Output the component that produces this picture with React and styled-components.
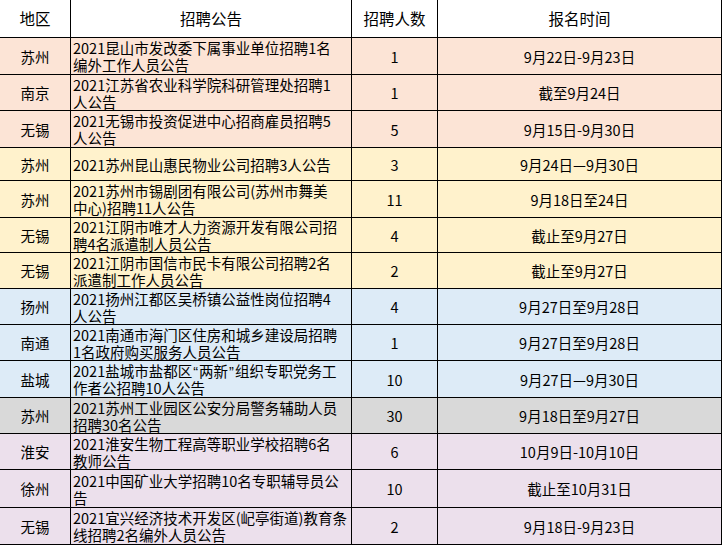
import React from "react";
import styled, { createGlobalStyle } from "styled-components";

const Global = createGlobalStyle`
  html, body { margin: 0; padding: 0; background: #ffffff; }
  body { font-family: "Noto Sans CJK SC", "Noto Sans", sans-serif; color: #000; }
`;

const palette = {
  pink: "#fce4d6",
  yellow: "#fff2cc",
  blue: "#ddebf7",
  gray: "#d9d9d9",
  purple: "#ece0ec",
  white: "#ffffff",
};

const Sheet = styled.div`
  width: 722px;
  display: flex;
  flex-direction: column;
  gap: 1px;
  background: #000;
  padding: 0 1px 1px 0;
  box-sizing: border-box;
`;

const Row = styled.div`
  display: grid;
  grid-template-columns: 70px 280px 85px 283px;
  column-gap: 1px;
  height: ${(p) => p.$h}px;
`;

const Cell = styled.div`
  background: ${(p) => palette[p.$tone]};
  display: flex;
  flex-direction: column;
  justify-content: center;
  align-items: ${(p) => (p.$left ? "flex-start" : "center")};
  padding: ${(p) => (p.$left ? "0 0 0 2px" : "0")};
  font-size: ${(p) => (p.$head ? "15.5px" : "14.5px")};
  line-height: 17px;
  overflow: hidden;
  white-space: nowrap;
`;

const Line = styled.span`
  display: block;
  height: 17px;
`;

const Quote = styled.span`
  font-family: "Liberation Sans", sans-serif;
  padding: 0 1px;
`;

const rows = [
  ["苏州", ["2021昆山市发改委下属事业单位招聘1名", "编外工作人员公告"], "1", "9月22日-9月23日", "pink", 36],
  ["南京", ["2021江苏省农业科学院科研管理处招聘1", "人公告"], "1", "截至9月24日", "pink", 35],
  ["无锡", ["2021无锡市投资促进中心招商雇员招聘5", "人公告"], "5", "9月15日-9月30日", "pink", 36],
  ["苏州", ["2021苏州昆山惠民物业公司招聘3人公告"], "3", "9月24日—9月30日", "yellow", 32],
  ["苏州", ["2021苏州市锡剧团有限公司(苏州市舞美", "中心)招聘11人公告"], "11", "9月18日至24日", "yellow", 36],
  ["无锡", ["2021江阴市唯才人力资源开发有限公司招", "聘4名派遣制人员公告"], "4", "截止至9月27日", "yellow", 34],
  ["无锡", ["2021江阴市国信市民卡有限公司招聘2名", "派遣制工作人员公告"], "2", "截止至9月27日", "yellow", 35],
  ["扬州", ["2021扬州江都区吴桥镇公益性岗位招聘4", "人公告"], "4", "9月27日至9月28日", "blue", 35],
  ["南通", ["2021南通市海门区住房和城乡建设局招聘", "1名政府购买服务人员公告"], "1", "9月27日至9月28日", "blue", 35],
  [
    "盐城",
    [
      <>
        2021盐城市盐都区<Quote>“</Quote>两新<Quote>”</Quote>组织专职党务工
      </>,
      "作者公招聘10人公告",
    ],
    "10",
    "9月27日—9月30日",
    "blue",
    36,
  ],
  ["苏州", ["2021苏州工业园区公安分局警务辅助人员", "招聘30名公告"], "30", "9月18日至9月27日", "gray", 35],
  ["淮安", ["2021淮安生物工程高等职业学校招聘6名", "教师公告"], "6", "10月9日-10月10日", "purple", 35],
  ["徐州", ["2021中国矿业大学招聘10名专职辅导员公", "告"], "10", "截止至10月31日", "purple", 37],
  ["无锡", ["2021宜兴经济技术开发区(屺亭街道)教育条", "线招聘2名编外人员公告"], "2", "9月18日-9月23日", "purple", 36],
];

export default function App() {
  return (
    <>
      <Global />
      <Sheet>
        <Row $h={37}>
          <Cell $tone="white" $head>地区</Cell>
          <Cell $tone="white" $head>招聘公告</Cell>
          <Cell $tone="white" $head>招聘人数</Cell>
          <Cell $tone="white" $head>报名时间</Cell>
        </Row>
        {rows.map(([area, lines, count, date, tone, h], i) => (
          <Row key={i} $h={h}>
            <Cell $tone={tone}>{area}</Cell>
            <Cell $tone={tone} $left>
              {lines.map((l, j) => (
                <Line key={j}>{l}</Line>
              ))}
            </Cell>
            <Cell $tone={tone}>{count}</Cell>
            <Cell $tone={tone}>{date}</Cell>
          </Row>
        ))}
      </Sheet>
    </>
  );
}
